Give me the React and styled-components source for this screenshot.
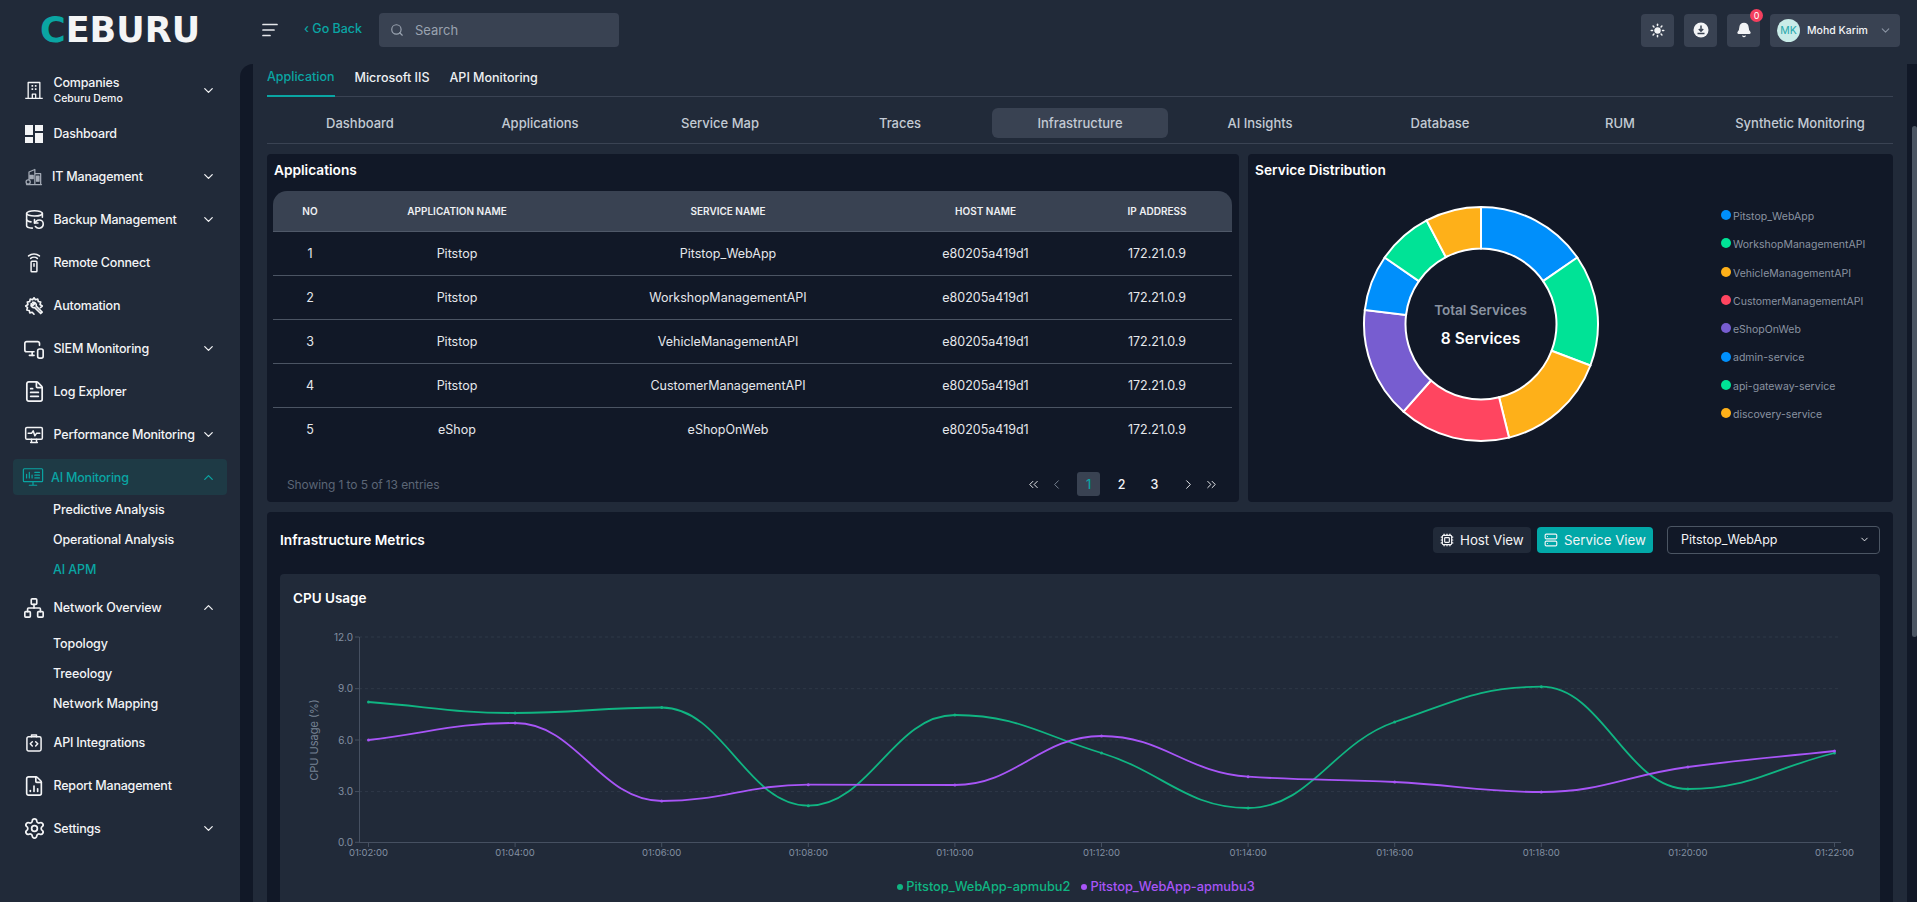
import React from 'react';
import styled, { createGlobalStyle } from 'styled-components';
import {
  Bell, ChevronDown, ChevronLeft, ChevronRight, ChevronUp, ChevronsLeft, ChevronsRight,
  Cpu, DatabaseBackup, FileChartColumn, FileText, MonitorSmartphone, Network, Search, Server, Settings, Sun,
} from 'lucide-react';

const GlobalStyle = createGlobalStyle`
  html, body {
    margin: 0;
    height: 100%;
    overflow: hidden;
    background: #212a39;
    font-family: Inter, "Noto Sans", sans-serif;
    color: #f3f4f6;
  }
  * { box-sizing: border-box; }
`;

const teal = '#0aa5a3';

const svgProps = {
  width: 20, height: 20, viewBox: '0 0 24 24', fill: 'none',
  stroke: 'currentColor', strokeWidth: 1.8, strokeLinecap: 'round', strokeLinejoin: 'round',
};

const BuildingIcon = () => (
  <svg {...svgProps} strokeWidth={1.6} strokeLinecap="butt">
    <path d="M5 22V3h14v19M1.500 22h21M10 22v-5h4v5" />
    <path d="M9 7h2M13 7h2M9 11h2M13 11h2" strokeWidth={2} />
  </svg>
);

const DashIcon = () => (
  <svg width="20" height="20" viewBox="0 0 20 20" fill="#f3f4f6">
    <rect x="1" y="1" width="8" height="10" />
    <rect x="11" y="1" width="8" height="6" />
    <rect x="1" y="13" width="8" height="6" />
    <rect x="11" y="9" width="8" height="10" />
  </svg>
);

const ItIcon = () => (
  <svg {...svgProps} strokeWidth={1.5} color="#a4abb6">
    <path d="M6 21V6l7-3v18M13 8h7v13M3 21h18" />
    <rect x="7" y="10" width="4" height="4" fill="#a4abb6" />
    <rect x="15" y="11" width="3" height="6" fill="#a4abb6" />
    <circle cx="5" cy="18" r="2.500" fill="#212a39" />
  </svg>
);

const RemoteIcon = () => (
  <svg {...svgProps}>
    <rect x="8.500" y="10" width="7" height="12.500" rx="1" />
    <path d="M12 13v3M8 6.500a6 6 0 0 1 8 0M5.500 3.500a10 10 0 0 1 13 0" />
  </svg>
);

const AutomationIcon = () => (
  <svg {...svgProps} width="22" height="22">
    <path d="M12 3l1.500 2.200 2.600-.7.600 2.600 2.600.7-.7 2.600L21 12l-2 1.700M12 3l-1.500 2.200-2.600-.7-.6 2.600-2.600.7.7 2.600L3 12l1.900 1.600-.7 2.600 2.600.7.6 2.600 2.600-.7L12 21" />
    <path d="M9 9.500a3.200 3.200 0 0 0 3.800 4.200l6.500 6.500 1.600-1.600-6.500-6.500A3.200 3.200 0 0 0 10.600 8l1.700 1.900-1.500 1.400z" />
  </svg>
);

const PerfIcon = () => (
  <svg {...svgProps}>
    <rect x="2" y="3" width="20" height="14" rx="1.500" />
    <path d="M5 10h4l2-3 2 6 2-3h4M8 21h8M9 17v4M15 17v4" />
  </svg>
);

const AiIcon = () => (
  <svg {...svgProps} width="22" height="22" strokeWidth={1.3}>
    <rect x="1.500" y="3" width="21" height="14" rx="1" />
    <path d="M5 13V9M8 13V7M11 13v-3M14 7h5M14 10h5M14 13h5M8 21h8M12 17v4" />
  </svg>
);

const ApiIcon = () => (
  <svg {...svgProps}>
    <rect x="3.500" y="4.500" width="17" height="17" rx="2" />
    <path d="M9 4.500V2.500h6v2M10 10.500L7.500 13l2.500 2.500M14 10.500l2.500 2.500-2.500 2.500" />
  </svg>
);

const MenuIcon = () => (
  <svg width="16" height="16" viewBox="0 0 16 16" stroke="#e5e7eb" strokeWidth="1.700" strokeLinecap="round">
    <path d="M1 2.500h14M1 8h11M1 13.500h7" />
  </svg>
);

const DownloadIcon = () => (
  <svg width="16" height="16" viewBox="0 0 16 16">
    <circle cx="8" cy="8" r="7.500" fill="#f3f4f6" />
    <path d="M8 3.500v5.500M5.800 7l2.200 2.200L10.200 7M4.500 11.500h7" stroke="#394252" strokeWidth="1.500" fill="none" />
  </svg>
);

const nav = [
  { label: 'Companies', sub: 'Ceburu Demo', icon: <BuildingIcon />, arrow: 'down', tall: true },
  { label: 'Dashboard', icon: <DashIcon /> },
  { label: 'IT Management', icon: <ItIcon />, arrow: 'down', tight: true },
  { label: 'Backup Management', icon: <DatabaseBackup {...svgProps} width={21} height={21} />, arrow: 'down' },
  { label: 'Remote Connect', icon: <RemoteIcon /> },
  { label: 'Automation', icon: <AutomationIcon /> },
  { label: 'SIEM Monitoring', icon: <MonitorSmartphone {...svgProps} width={22} height={22} />, arrow: 'down' },
  { label: 'Log Explorer', icon: <FileText {...svgProps} width={23} height={23} /> },
  { label: 'Performance Monitoring', icon: <PerfIcon />, arrow: 'down' },
  { label: 'AI Monitoring', icon: <AiIcon />, arrow: 'up', active: true, children: [
    { label: 'Predictive Analysis' }, { label: 'Operational Analysis' }, { label: 'AI APM', active: true },
  ] },
  { label: 'Network Overview', icon: <Network {...svgProps} width={22} height={22} />, arrow: 'up', children: [
    { label: 'Topology' }, { label: 'Treeology' }, { label: 'Network Mapping' },
  ] },
  { label: 'API Integrations', icon: <ApiIcon /> },
  { label: 'Report Management', icon: <FileChartColumn {...svgProps} width={22} height={22} /> },
  { label: 'Settings', icon: <Settings {...svgProps} width={23} height={23} />, arrow: 'down' },
];

const mainTabs = ['Dashboard', 'Applications', 'Service Map', 'Traces', 'Infrastructure', 'AI Insights', 'Database', 'RUM', 'Synthetic Monitoring'];

const rows = [
  [1, 'Pitstop', 'Pitstop_WebApp'],
  [2, 'Pitstop', 'WorkshopManagementAPI'],
  [3, 'Pitstop', 'VehicleManagementAPI'],
  [4, 'Pitstop', 'CustomerManagementAPI'],
  [5, 'eShop', 'eShopOnWeb'],
];

const services = [
  ['Pitstop_WebApp', '#008ffb', 2],
  ['WorkshopManagementAPI', '#00e396', 2],
  ['VehicleManagementAPI', '#feb019', 2],
  ['CustomerManagementAPI', '#ff4560', 2],
  ['eShopOnWeb', '#775dd0', 2],
  ['admin-service', '#008ffb', 1],
  ['api-gateway-service', '#00e396', 1],
  ['discovery-service', '#feb019', 1],
];

// pixel heights read off the chart, top of the svg is y=0
const greenLine = [82, 93, 87.5, 185.7, 95, 133, 188, 102, 66.7, 169, 133];
const purpleLine = [120, 103, 181, 164.7, 165, 116, 156.7, 162, 172, 147, 131];
const times = ['01:02:00', '01:04:00', '01:06:00', '01:08:00', '01:10:00', '01:12:00', '01:14:00', '01:16:00', '01:18:00', '01:20:00', '01:22:00'];
const X0 = 88.5;
const STEP = 146.6;
const xAt = (i) => X0 + i * STEP;

function smoothPath(ys) {
  const slopes = ys.slice(1).map((y, i) => (y - ys[i]) / STEP);
  const tangents = ys.map((_, i) => {
    if (i === 0) return slopes[0];
    if (i === ys.length - 1) return slopes[i - 1];
    const a = slopes[i - 1];
    const b = slopes[i];
    return a * b <= 0 ? 0 : (2 * a * b) / (a + b);
  });
  let d = `M${xAt(0)} ${ys[0]}`;
  for (let i = 1; i < ys.length; i++) {
    const h = STEP * 0.42;
    d += ` C${xAt(i - 1) + h} ${ys[i - 1] + tangents[i - 1] * h} ${xAt(i) - h} ${ys[i] - tangents[i] * h} ${xAt(i)} ${ys[i]}`;
  }
  return d;
}

function donutSlice(start, end, r1, r2, cx, cy) {
  const pt = (a, r) => {
    const t = ((a - 90) * Math.PI) / 180;
    return `${(cx + r * Math.cos(t)).toFixed(2)} ${(cy + r * Math.sin(t)).toFixed(2)}`;
  };
  const large = end - start > 180 ? 1 : 0;
  return `M${pt(start, r1)} A${r1} ${r1} 0 ${large} 1 ${pt(end, r1)} L${pt(end, r2)} A${r2} ${r2} 0 ${large} 0 ${pt(start, r2)} Z`;
}

function Donut() {
  let angle = 0;
  return (
    <svg width="240" height="240" viewBox="0 0 240 240">
      {services.map(([name, color, units]) => {
        const start = angle;
        angle += (units / 13) * 360;
        return <path key={name} d={donutSlice(start, angle, 117, 75.5, 120, 120)} fill={color} stroke="#fff" strokeWidth="2" />;
      })}
    </svg>
  );
}

function CpuChart() {
  const gridY = [17, 68.7, 120, 171.6];
  const labels = [['12.0', 17], ['9.0', 68.7], ['6.0', 120], ['3.0', 171.6], ['0.0', 222.3]];
  return (
    <svg width="1600" height="242" viewBox="0 0 1600 242">
      {gridY.map((y) => <line key={y} x1="79" x2="1561" y1={y} y2={y} stroke="#2f3848" strokeDasharray="3 3" />)}
      <line x1="79.500" x2="79.500" y1="17" y2="222.500" stroke="#465061" />
      <line x1="79" x2="1561" y1="222.500" y2="222.500" stroke="#465061" />
      {labels.map(([t, y]) => (
        <g key={t}>
          <line x1="75" x2="79" y1={y} y2={y} stroke="#465061" />
          <text x="73" y={y + 3.5} textAnchor="end" fontSize="10" fill="#8390a2">{t}</text>
        </g>
      ))}
      {times.map((t, i) => (
        <g key={t}>
          <line x1={xAt(i)} x2={xAt(i)} y1="222" y2="227" stroke="#465061" />
          <text x={xAt(i)} y="236" textAnchor="middle" fontSize="9.500" fill="#8390a2">{t}</text>
        </g>
      ))}
      <text transform="translate(37.500 120) rotate(-90)" textAnchor="middle" fontSize="11" fill="#768294">CPU Usage (%)</text>
      <path d={smoothPath(greenLine)} fill="none" stroke="#10b582" strokeWidth="1.800" />
      <path d={smoothPath(purpleLine)} fill="none" stroke="#a855f7" strokeWidth="1.800" />
      {greenLine.map((y, i) => <circle key={i} cx={xAt(i)} cy={y} r="1.500" fill="#10b582" />)}
      {purpleLine.map((y, i) => <circle key={i} cx={xAt(i)} cy={y} r="1.500" fill="#a855f7" />)}
    </svg>
  );
}

function NavEntry({ item }) {
  return (
    <>
      <NavRow $active={item.active} $tall={item.tall} $tight={item.tight || item.active}>
        <NavIcon>{item.icon}</NavIcon>
        <NavLabel>
          {item.label}
          {item.sub && <NavSub>{item.sub}</NavSub>}
        </NavLabel>
        {item.arrow === 'down' && <ChevronDown size={15} />}
        {item.arrow === 'up' && <ChevronUp size={15} />}
      </NavRow>
      {item.children && (
        <SubList $active={item.active}>
          {item.children.map((c) => <SubItem key={c.label} $active={c.active}>{c.label}</SubItem>)}
        </SubList>
      )}
    </>
  );
}

export default function App() {
  return (
    <Shell>
      <GlobalStyle />
      <TopBar>
        <Logo><LogoC>C</LogoC>EBURU</Logo>
        <MenuBtn><MenuIcon /></MenuBtn>
        <GoBack>‹ Go Back</GoBack>
        <SearchBox><Search size={14} color="#9aa3b0" /><span>Search</span></SearchBox>
        <TopRight>
          <IconBtn><Sun size={15} fill="#f3f4f6" strokeWidth={2.4} /></IconBtn>
          <IconBtn><DownloadIcon /></IconBtn>
          <IconBtn>
            <Bell size={16} fill="#f3f4f6" />
            <Badge>0</Badge>
          </IconBtn>
          <UserBtn>
            <Avatar>MK</Avatar>
            <UserName>Mohd Karim</UserName>
            <ChevronDown size={13} color="#8a93a2" />
          </UserBtn>
        </TopRight>
      </TopBar>
      <Body>
        <Sidebar>
          {nav.map((item) => <NavEntry key={item.label} item={item} />)}
        </Sidebar>
        <Gutter />
        <Content>
          <ProductTabs>
            <ProductTab $active>Application</ProductTab>
            <ProductTab>Microsoft IIS</ProductTab>
            <ProductTab>API Monitoring</ProductTab>
          </ProductTabs>
          <MainTabs>
            {mainTabs.map((t) => <MainTab key={t} $active={t === 'Infrastructure'}>{t}</MainTab>)}
          </MainTabs>
          <TopCards>
            <Card>
              <CardTitle>Applications</CardTitle>
              <Table>
                <thead>
                  <tr>
                    <Th $w={74}>NO</Th>
                    <Th $w={220}>APPLICATION NAME</Th>
                    <Th $w={322}>SERVICE NAME</Th>
                    <Th $w={193}>HOST NAME</Th>
                    <Th>IP ADDRESS</Th>
                  </tr>
                </thead>
                <tbody>
                  {rows.map(([no, app, service]) => (
                    <tr key={no}>
                      <Td>{no}</Td>
                      <Td>{app}</Td>
                      <Td>{service}</Td>
                      <Td>e80205a419d1</Td>
                      <Td>172.21.0.9</Td>
                    </tr>
                  ))}
                </tbody>
              </Table>
              <TableFoot>
                <Showing>Showing 1 to 5 of 13 entries</Showing>
                <Pager>
                  <PageBtn><ChevronsLeft size={15} strokeWidth={1.5} /></PageBtn>
                  <PageBtn $dim><ChevronLeft size={15} strokeWidth={1.5} /></PageBtn>
                  <PageBtn $num $active>1</PageBtn>
                  <PageBtn $num>2</PageBtn>
                  <PageBtn $num>3</PageBtn>
                  <PageBtn><ChevronRight size={15} strokeWidth={1.5} /></PageBtn>
                  <PageBtn><ChevronsRight size={15} strokeWidth={1.5} /></PageBtn>
                </Pager>
              </TableFoot>
            </Card>
            <Card>
              <CardTitle>Service Distribution</CardTitle>
              <DistBody>
                <DonutWrap>
                  <Donut />
                  <DonutCenter>
                    <DonutCaption>Total Services</DonutCaption>
                    <DonutValue>8 Services</DonutValue>
                  </DonutCenter>
                </DonutWrap>
                <Legend>
                  {services.map(([name, color]) => (
                    <LegendItem key={name}>
                      <LegendDot $color={color} />
                      {name}
                    </LegendItem>
                  ))}
                </Legend>
              </DistBody>
            </Card>
          </TopCards>
          <MetricsCard>
            <MetricsHead>
              <MetricsTitle>Infrastructure Metrics</MetricsTitle>
              <ViewBtn><Cpu size={14} />Host View</ViewBtn>
              <ViewBtn $active><Server size={14} />Service View</ViewBtn>
              <SelectBox>Pitstop_WebApp<ChevronDown size={11} /></SelectBox>
            </MetricsHead>
            <ChartCard>
              <ChartTitle>CPU Usage</ChartTitle>
              <CpuChart />
              <ChartLegend>
                <ChartKey $color="#10b582"><i />Pitstop_WebApp-apmubu2</ChartKey>
                <ChartKey $color="#a855f7"><i />Pitstop_WebApp-apmubu3</ChartKey>
              </ChartLegend>
            </ChartCard>
          </MetricsCard>
        </Content>
        <Track><Thumb /></Track>
      </Body>
    </Shell>
  );
}

const Shell = styled.div`
  height: 100vh;
  display: flex;
  flex-direction: column;
  overflow: hidden;
`;

const TopBar = styled.header`
  height: 64px;
  flex: none;
  display: flex;
  align-items: center;
  padding: 0 17px 4px 40px;
`;

const Logo = styled.div`
  width: 222px;
  font-family: "DejaVu Sans", sans-serif;
  font-weight: 700;
  font-size: 35px;
  line-height: 36px;
  color: #f4f5f6;
  white-space: nowrap;
`;

const LogoC = styled.span`
  color: ${teal};
`;

const MenuBtn = styled.div`
  display: flex;
  width: 42px;
`;

const GoBack = styled.div`
  width: 75px;
  font-size: 12.500px;
  font-weight: 500;
  color: ${teal};
  margin-top: -4px;
  white-space: nowrap;
`;

const SearchBox = styled.div`
  width: 240px;
  height: 34px;
  background: #394252;
  border-radius: 4px;
  display: flex;
  align-items: center;
  gap: 11px;
  padding: 0 11px;
  font-size: 13px;
  color: #9aa3b0;
`;

const TopRight = styled.div`
  margin-left: auto;
  display: flex;
  align-items: center;
  gap: 10px;
`;

const IconBtn = styled.div`
  position: relative;
  width: 33px;
  height: 33px;
  background: #394252;
  border-radius: 4px;
  display: flex;
  align-items: center;
  justify-content: center;
  color: #f3f4f6;
`;

const Badge = styled.span`
  position: absolute;
  top: -5px;
  right: -3px;
  width: 13px;
  height: 13px;
  border-radius: 50%;
  background: #f43f5e;
  color: #fff;
  font-size: 9px;
  line-height: 13px;
  text-align: center;
`;

const UserBtn = styled.div`
  width: 130px;
  height: 33px;
  background: #394252;
  border-radius: 4px;
  display: flex;
  align-items: center;
  padding: 0 8px 0 7px;
  gap: 7px;
`;

const Avatar = styled.div`
  width: 23px;
  height: 23px;
  flex: none;
  border-radius: 50%;
  background: #c9ece8;
  color: #27a8ab;
  font-size: 10.500px;
  line-height: 23px;
  text-align: center;
`;

const UserName = styled.div`
  flex: 1;
  font-size: 10.500px;
  font-weight: 500;
  white-space: nowrap;
`;

const Body = styled.div`
  flex: 1;
  min-height: 0;
  display: flex;
`;

const Sidebar = styled.nav`
  width: 240px;
  flex: none;
`;

const NavRow = styled.div`
  display: flex;
  align-items: center;
  height: ${(p) => (p.$tall ? '48px' : p.$active ? '36px' : '43px')};
  margin: ${(p) => (p.$active ? '3px 13px 0' : '0')};
  padding: ${(p) => (p.$active ? '0 11px 0 10px' : p.$tall ? '4px 24px 0' : '0 24px')};
  gap: ${(p) => (p.$tight ? '8px' : '9.500px')};
  border-radius: 4px;
  background: ${(p) => (p.$active ? '#1e3a45' : 'transparent')};
  color: ${(p) => (p.$active ? teal : '#f3f4f6')};
  & > svg { flex: none; }
`;

const NavIcon = styled.div`
  width: 20px;
  display: flex;
  justify-content: center;
  flex: none;
  svg { flex: none; }
`;

const NavLabel = styled.div`
  flex: 1;
  min-width: 0;
  font-size: 12.500px;
  font-weight: 500;
  letter-spacing: -0.2px;
  line-height: 15px;
  white-space: nowrap;
`;

const NavSub = styled.div`
  font-size: 10.500px;
  letter-spacing: 0;
  margin-top: 1px;
`;

const SubList = styled.div`
  padding-bottom: ${(p) => (p.$active ? '1px' : '2px')};
`;

const SubItem = styled.div`
  height: 30px;
  line-height: 30px;
  padding-left: 53px;
  font-size: 12.500px;
  font-weight: 500;
  letter-spacing: -0.1px;
  color: ${(p) => (p.$active ? teal : '#f3f4f6')};
`;

const Gutter = styled.div`
  width: 13px;
  flex: none;
  background: #111827;
  border-top-left-radius: 14px;
`;

const Content = styled.main`
  flex: 1;
  min-width: 0;
  padding: 0 14px;
  overflow: hidden;
`;

const Track = styled.div`
  width: 10px;
  flex: none;
  background: #111827;
  padding: 62px 0 0 5px;
`;

const Thumb = styled.div`
  height: 511px;
  background: #4b5563;
  border-radius: 3px;
`;

const ProductTabs = styled.div`
  height: 33px;
  display: flex;
  gap: 20px;
  border-bottom: 1px solid #3a4353;
`;

const ProductTab = styled.div`
  height: 33px;
  padding-top: ${(p) => (p.$active ? '5px' : '6px')};
  font-size: 12.500px;
  font-weight: 500;
  line-height: 16px;
  color: ${(p) => (p.$active ? teal : '#eef0f3')};
  border-bottom: ${(p) => (p.$active ? `2px solid ${teal}` : 'none')};
`;

const MainTabs = styled.div`
  display: grid;
  grid-template-columns: repeat(9, 1fr);
  height: 47px;
  padding: 11px 3px 0;
  border-bottom: 1px solid #3a4353;
`;

const MainTab = styled.div`
  height: 30px;
  line-height: 30px;
  margin: 0 ${(p) => (p.$active ? '2px' : '0')};
  text-align: center;
  font-size: 13px;
  font-weight: 500;
  color: #c3cad4;
  background: ${(p) => (p.$active ? '#394252' : 'transparent')};
  border-radius: 6px;
  white-space: nowrap;
`;

const TopCards = styled.div`
  display: grid;
  grid-template-columns: 972px 1fr;
  gap: 9px;
  margin-top: 10px;
`;

const Card = styled.section`
  height: 348px;
  background: #111827;
  border-radius: 4px;
  padding: 6px;
`;

const CardTitle = styled.h3`
  margin: 0 0 11px 1px;
  font-size: 13.700px;
  font-weight: 600;
  line-height: 20px;
  color: #fff;
`;

const Table = styled.table`
  width: 959px;
  border-collapse: collapse;
  table-layout: fixed;
`;

const Th = styled.th`
  width: ${(p) => (p.$w ? `${p.$w}px` : 'auto')};
  height: 40px;
  background: #394252;
  border-bottom: 1px solid #4f5868;
  font-size: 10px;
  font-weight: 600;
  color: #eef0f3;
  &:first-child { border-top-left-radius: 14px; }
  &:last-child { border-top-right-radius: 14px; }
`;

const Td = styled.td`
  height: 44px;
  padding: 0;
  text-align: center;
  font-size: 12.500px;
  color: #e5e7eb;
  border-bottom: 1px solid #4b5463;
  tr:last-child & { border-bottom: none; }
`;

const TableFoot = styled.div`
  display: flex;
  align-items: center;
  justify-content: space-between;
  margin-top: 21px;
  padding: 0 10px 0 14px;
`;

const Showing = styled.div`
  font-size: 12px;
  letter-spacing: -0.1px;
  color: #5c6676;
`;

const Pager = styled.div`
  display: flex;
  align-items: center;
  & > :nth-child(2) { margin-right: 4px; }
  & > :nth-child(6) { margin-left: 6px; }
`;

const PageBtn = styled.div`
  width: 23px;
  margin: 0 ${(p) => (p.$num ? '5px' : '0')};
  height: 24px;
  display: flex;
  align-items: center;
  justify-content: center;
  font-size: 12.500px;
  font-weight: 500;
  border-radius: 3px;
  background: ${(p) => (p.$active ? '#394252' : 'transparent')};
  color: ${(p) => (p.$active ? teal : p.$dim ? '#7d8796' : '#f3f4f6')};
`;

const DistBody = styled.div`
  display: flex;
  margin: 0 -6px;
`;

const DonutWrap = styled.div`
  position: relative;
  width: 465px;
  height: 240px;
  margin-top: 13px;
  display: flex;
  justify-content: center;
`;

const DonutCenter = styled.div`
  position: absolute;
  inset: 0;
  display: flex;
  flex-direction: column;
  align-items: center;
  justify-content: center;
  gap: 11px;
`;

const DonutCaption = styled.div`
  font-size: 13.500px;
  font-weight: 600;
  line-height: 18px;
  color: #8a93a1;
`;

const DonutValue = styled.div`
  font-size: 15.500px;
  font-weight: 600;
  line-height: 18px;
  color: #fff;
`;

const Legend = styled.div`
  margin-left: 8px;
  margin-top: 12px;
  display: flex;
  flex-direction: column;
`;

const LegendItem = styled.div`
  height: 28.300px;
  line-height: 28.300px;
  display: flex;
  align-items: center;
  gap: 2px;
  font-size: 10.500px;
  color: #8a93a1;
  white-space: nowrap;
`;

const LegendDot = styled.span`
  width: 10px;
  height: 10px;
  margin-top: -4px;
  flex: none;
  border-radius: 50%;
  background: ${(p) => p.$color};
`;

const MetricsCard = styled.section`
  margin-top: 10px;
  background: #111827;
  border-radius: 4px;
  padding: 14px 13px;
`;

const MetricsHead = styled.div`
  display: flex;
  align-items: center;
  gap: 6px;
  height: 27px;
`;

const MetricsTitle = styled.h3`
  margin: 0;
  flex: 1;
  font-size: 13.700px;
  font-weight: 600;
  color: #fff;
`;

const ViewBtn = styled.div`
  height: 26px;
  width: ${(p) => (p.$active ? '116px' : '98px')};
  margin-right: ${(p) => (p.$active ? '8px' : '0')};
  display: flex;
  align-items: center;
  gap: 6px;
  padding: 0 7px;
  border-radius: 4px;
  font-size: 13.300px;
  white-space: nowrap;
  background: ${(p) => (p.$active ? '#02a8a8' : '#212a39')};
  color: #f3f4f6;
`;

const SelectBox = styled.div`
  width: 213px;
  height: 28px;
  display: flex;
  align-items: center;
  justify-content: space-between;
  padding: 0 9px 0 13px;
  border: 1px solid #4b5563;
  border-radius: 4px;
  font-size: 12.500px;
  color: #f3f4f6;
`;

const ChartCard = styled.div`
  margin-top: 21px;
  height: 400px;
  background: #212a39;
  border-radius: 4px;
`;

const ChartTitle = styled.h4`
  margin: 0;
  padding: 14px 13px 0;
  height: 46px;
  font-size: 13.500px;
  font-weight: 600;
  line-height: 20px;
  color: #fff;
`;

const ChartLegend = styled.div`
  display: flex;
  justify-content: center;
  gap: 11px;
  margin-top: 13px;
  padding-right: 8px;
`;

const ChartKey = styled.div`
  display: flex;
  align-items: center;
  gap: 3px;
  font-size: 12.800px;
  font-weight: 500;
  color: ${(p) => p.$color};
  i {
    width: 6px;
    height: 6px;
    border-radius: 50%;
    background: ${(p) => p.$color};
  }
`;
